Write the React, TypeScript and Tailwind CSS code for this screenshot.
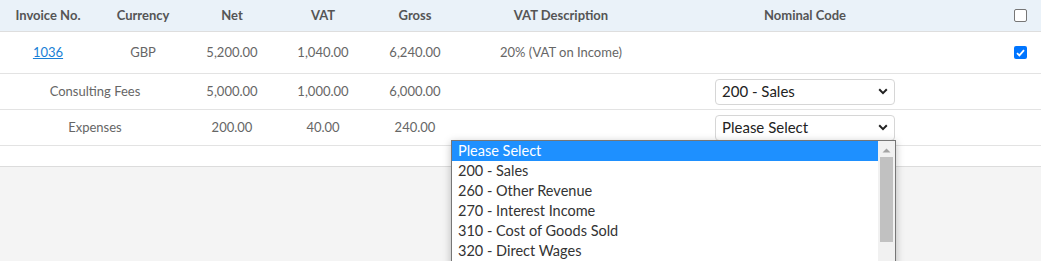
import React from 'react';

const cols = 'grid grid-cols-[96px_94px_84px_98px_86px_206px_282px_1fr]';

const nominalOptions = [
  'Please Select',
  '200 - Sales',
  '260 - Other Revenue',
  '270 - Interest Income',
  '310 - Cost of Goods Sold',
  '320 - Direct Wages',
];

function Chevron() {
  return (
    <svg width="10" height="7" viewBox="0 0 10 7" className="shrink-0">
      <path d="M1.2 1.3 L5 5.1 L8.8 1.3" fill="none" stroke="#222" strokeWidth="2" />
    </svg>
  );
}

function Checkbox({ checked }: { checked?: boolean }) {
  if (checked) {
    return (
      <span className="w-[13px] h-[13px] rounded-[2px] bg-[#0075ff] flex items-center justify-center">
        <svg width="9" height="8" viewBox="0 0 9 8">
          <path d="M1 4.2 L3.4 6.4 L8 1.2" fill="none" stroke="#fff" strokeWidth="1.8" />
        </svg>
      </span>
    );
  }
  return <span className="w-[13px] h-[13px] rounded-[2px] border border-[#767676] bg-white" />;
}

function FakeSelect({ value, children }: { value: string; children?: React.ReactNode }) {
  return (
    <div className="relative text-left">
      <div className="w-[180px] h-[26px] border border-[#d6d6d6] rounded-[4px] bg-white flex items-center justify-between pl-[6px] pr-[6px] text-[15px] text-[#222]">
        <span>{value}</span>
        <Chevron />
      </div>
      {children}
    </div>
  );
}

// native-looking popup list of the open select
function Dropdown() {
  return (
    <div className="absolute left-[-264px] top-[25px] w-[445px] h-[140px] bg-white border border-[#767676] shadow-[0_2px_8px_rgba(0,0,0,0.25)] flex z-10 text-left">
      <div className="flex-1 flex flex-col">
        {nominalOptions.map((o, i) => (
          <div
            key={o}
            className={
              i === 0
                ? 'h-[20px] leading-[20px] pl-[6px] text-[14.5px] bg-[#1e90ff] text-white'
                : 'h-[20px] leading-[20px] pl-[6px] text-[14.5px] text-[#333]'
            }
          >
            {o}
          </div>
        ))}
      </div>
      <div className="w-[17px] bg-[#f1f1f1] flex flex-col items-center">
        <svg width="9" height="5" viewBox="0 0 9 5" className="mt-[7px]">
          <path d="M0.5 4.5 L4.5 0.5 L8.5 4.5 Z" fill="#a3a3a3" />
        </svg>
        <div className="mt-[4px] w-[13px] h-[85px] bg-[#c1c1c1]" />
      </div>
    </div>
  );
}

export default function App() {
  return (
    <div className="w-[1041px] h-[261px] bg-[#f4f4f4] overflow-hidden font-['Lato',sans-serif] text-[13px]">
      <div className="bg-white">
        {/* Header */}
        <div className={`${cols} h-[32px] bg-[#eaf2f9] border-b border-[#dedede] items-center text-center font-bold text-[#555]`}>
          <div>Invoice No.</div>
          <div>Currency</div>
          <div>Net</div>
          <div>VAT</div>
          <div>Gross</div>
          <div>VAT Description</div>
          <div>Nominal Code</div>
          <div className="flex justify-end pr-[14px]">
            <Checkbox />
          </div>
        </div>

        {/* Invoice row */}
        <div className={`${cols} h-[42px] border-b border-[#e3e3e3] items-center text-center text-[#666]`}>
          <div>
            <span className="text-[#1a7fd6] underline">1036</span>
          </div>
          <div>GBP</div>
          <div>5,200.00</div>
          <div>1,040.00</div>
          <div>6,240.00</div>
          <div>20% (VAT on Income)</div>
          <div />
          <div className="flex justify-end pr-[14px]">
            <Checkbox checked />
          </div>
        </div>

        {/* Line: Consulting Fees */}
        <div className={`${cols} h-[36px] border-b border-[#e3e3e3] items-center text-center text-[#666]`}>
          <div className="col-span-2">Consulting Fees</div>
          <div>5,000.00</div>
          <div>1,000.00</div>
          <div>6,000.00</div>
          <div />
          <div className="flex justify-center">
            <FakeSelect value="200 - Sales" />
          </div>
          <div />
        </div>

        {/* Line: Expenses */}
        <div className={`${cols} h-[36px] border-b border-[#e3e3e3] items-center text-center text-[#666]`}>
          <div className="col-span-2">Expenses</div>
          <div>200.00</div>
          <div>40.00</div>
          <div>240.00</div>
          <div />
          <div className="flex justify-center">
            <FakeSelect value="Please Select">
              <Dropdown />
            </FakeSelect>
          </div>
          <div />
        </div>

        <div className="h-[21px] border-b border-[#dcdcdc]" />
      </div>
    </div>
  );
}
